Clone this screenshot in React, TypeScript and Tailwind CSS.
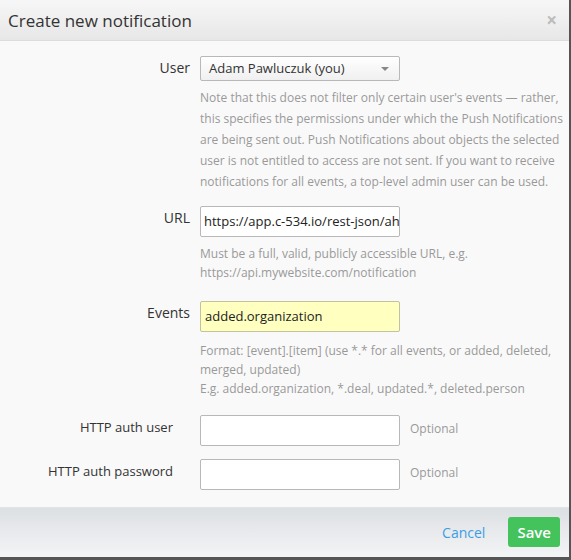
const font = { fontFamily: "'Open Sans', 'Noto Sans', sans-serif" };

function Row({
  label,
  children,
  help,
  className = "",
}: {
  label: string;
  children: React.ReactNode;
  help?: React.ReactNode;
  className?: string;
}) {
  return (
    <div className={`grid grid-cols-[190px_1fr] gap-x-[10px] ${className}`}>
      <label className="text-right text-[14px] leading-[24px] text-[#333]">{label}</label>
      <div>
        {children}
        {help}
      </div>
    </div>
  );
}

export default function App() {
  return (
    <div className="w-[571px] h-[560px] bg-[#555] overflow-hidden" style={font}>
      <div className="w-[569px] h-[557px] flex flex-col bg-[#f9f9f9] rounded-tr-[2px]">
        {/* Header */}
        <div className="h-[41px] flex items-center justify-between pl-[8px] pr-[12px] bg-gradient-to-b from-[#f7f7f7] to-[#e7e7e7] border-b border-[#dcdcdc]">
          <h1 className="text-[17px] text-[#333] mt-[1px]">Create new notification</h1>
          <span className="text-[19px] font-bold text-[#bcbcbc] leading-none mt-[1px]">×</span>
        </div>

        {/* Body */}
        <div className="flex-1 flex flex-col pt-[15px] gap-[14px]">
          <Row
            label="User"
            help={
              <div className="mt-[6px] whitespace-nowrap text-[12px] leading-[21px] text-[#999]">
                Note that this does not filter only certain user's events — rather,
                <br />
                this specifies the permissions under which the Push Notifications
                <br />
                are being sent out. Push Notifications about objects the selected
                <br />
                user is not entitled to access are not sent. If you want to receive
                <br />
                notifications for all events, a top-level admin user can be used.
              </div>
            }
          >
            <div className="w-[200px] h-[25px] flex items-center justify-between pl-[8px] pr-[10px] border border-[#b8b8b8] rounded-[2px] bg-gradient-to-b from-white to-[#f0f0f0] text-[13px] text-[#333]">
              <span>Adam Pawluczuk (you)</span>
              <span className="w-0 h-0 border-l-[4px] border-r-[4px] border-t-[4px] border-l-transparent border-r-transparent border-t-[#888]" />
            </div>
          </Row>

          <Row
            label="URL"
            help={
              <div className="mt-[7px] text-[12px] leading-[19px] text-[#999]">
                Must be a full, valid, publicly accessible URL, e.g.
                <br />
                https://api.mywebsite.com/notification
              </div>
            }
          >
            <div className="w-[200px] h-[31px] flex items-center px-[3px] border border-[#b8b8b8] rounded-[2px] bg-white text-[13px] text-[#222] overflow-hidden whitespace-nowrap">
              https://app.c-534.io/rest-json/ahk
            </div>
          </Row>

          <Row
            label="Events"
            className="mt-[5px]"
            help={
              <div className="mt-[9px] w-[352px] text-[12px] leading-[19px] text-[#999]">
                Format: [event].[item] (use *.* for all events, or added, deleted, merged,
                updated)
                <br />
                E.g. added.organization, *.deal, updated.*, deleted.person
              </div>
            }
          >
            <div className="w-[200px] h-[31px] flex items-center px-[4px] border border-[#c2c2a0] rounded-[2px] bg-[#ffffc0] text-[13px] text-[#222]">
              added.organization
            </div>
          </Row>

          <div className="flex flex-col gap-[13px] mt-[3px]">
            {["HTTP auth user", "HTTP auth password"].map((l) => (
              <div key={l} className="grid grid-cols-[173px_200px_1fr] gap-x-[27px] items-start">
                <label className="text-right text-[13px] leading-[24px] text-[#333]">{l}</label>
                <div className="h-[31px] border border-[#b8b8b8] rounded-[2px] bg-white" />
                <span className="-ml-[17px] text-[12px] text-[#999] leading-[27px]">Optional</span>
              </div>
            ))}
          </div>
        </div>

        {/* Footer */}
        <div className="h-[50px] flex items-center justify-end gap-[23px] pr-[9px] pb-[1px] bg-gradient-to-b from-[#dde0e3] to-[#f3f4f6] border-t border-[#e2e4e6]">
          <button className="text-[14px] text-[#3a9ee4]">Cancel</button>
          <button className="h-[30px] px-[9px] rounded-[3px] bg-[#44c25c] text-white text-[15px] font-semibold">
            Save
          </button>
        </div>
      </div>
    </div>
  );
}
